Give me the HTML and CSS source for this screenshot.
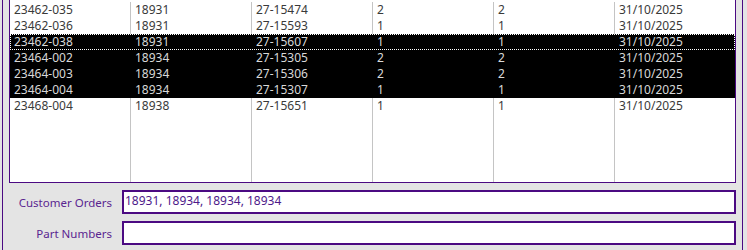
FILE: index.html
```html
<!DOCTYPE html>
<html lang="en">
  <head>
    <meta charset="UTF-8" />
    <title>Order Lines</title>
    <link rel="stylesheet" href="styles.css">
  </head>
  <body>
    <div class="form">
      <div class="list">
        <div class="row">
          <div class="cell">23462-035</div>
          <div class="cell">18931</div>
          <div class="cell">27-15474</div>
          <div class="cell">2</div>
          <div class="cell">2</div>
          <div class="cell">31/10/2025</div>
        </div>
        <div class="row">
          <div class="cell">23462-036</div>
          <div class="cell">18931</div>
          <div class="cell">27-15593</div>
          <div class="cell">1</div>
          <div class="cell">1</div>
          <div class="cell">31/10/2025</div>
        </div>
        <div class="row selected focused">
          <div class="cell">23462-038</div>
          <div class="cell">18931</div>
          <div class="cell">27-15607</div>
          <div class="cell">1</div>
          <div class="cell">1</div>
          <div class="cell">31/10/2025</div>
        </div>
        <div class="row selected">
          <div class="cell">23464-002</div>
          <div class="cell">18934</div>
          <div class="cell">27-15305</div>
          <div class="cell">2</div>
          <div class="cell">2</div>
          <div class="cell">31/10/2025</div>
        </div>
        <div class="row selected">
          <div class="cell">23464-003</div>
          <div class="cell">18934</div>
          <div class="cell">27-15306</div>
          <div class="cell">2</div>
          <div class="cell">2</div>
          <div class="cell">31/10/2025</div>
        </div>
        <div class="row selected">
          <div class="cell">23464-004</div>
          <div class="cell">18934</div>
          <div class="cell">27-15307</div>
          <div class="cell">1</div>
          <div class="cell">1</div>
          <div class="cell">31/10/2025</div>
        </div>
        <div class="row">
          <div class="cell">23468-004</div>
          <div class="cell">18938</div>
          <div class="cell">27-15651</div>
          <div class="cell">1</div>
          <div class="cell">1</div>
          <div class="cell">31/10/2025</div>
        </div>
        <div class="row filler">
          <div class="cell"></div>
          <div class="cell"></div>
          <div class="cell"></div>
          <div class="cell"></div>
          <div class="cell"></div>
          <div class="cell"></div>
        </div>
      </div>

      <div class="field">
        <label class="field-label">Customer Orders</label>
        <div class="field-box">18931, 18934, 18934, 18934</div>
      </div>
      <div class="field">
        <label class="field-label">Part Numbers</label>
        <div class="field-box"></div>
      </div>
    </div>
  </body>
</html>
```

FILE: styles.css
```css
* {
  margin: 0;
  padding: 0;
  box-sizing: border-box;
}

:root {
  --panel-color: #e4e4e4;
  --frame-color: #4b0a82;
  --grid-color: #c4c4c4;
  --text-color: #3a3a3a;
}

body {
  font-family: "Noto Sans", "Open Sans", sans-serif;
  font-size: 12px;
  background: var(--panel-color);
  color: var(--text-color);
  overflow: hidden;
}

.form {
  margin-left: 2px;
  width: 741px;
  height: 250px;
  border-left: 1px solid var(--frame-color);
  border-right: 1px solid var(--frame-color);
  padding: 0 6px;
  display: flex;
  flex-direction: column;
}

.list {
  height: 183px;
  background: #ffffff;
  border: 1px solid var(--frame-color);
  border-top: none;
  padding-top: 2px;
  display: flex;
  flex-direction: column;
}

.row {
  display: flex;
  height: 16px;
  line-height: 16px;
  position: relative;
}

.cell {
  width: 121px;
  padding-left: 4px;
  border-right: 1px solid var(--grid-color);
  white-space: nowrap;
}

.cell:last-child {
  width: 120px;
  border-right: none;
}

.row.selected {
  background: #000000;
  color: #d8d8d8;
}

.row.selected .cell {
  border-right-color: #000000;
}

.row.focused::after {
  content: "";
  position: absolute;
  inset: 0;
  border: 1px dotted #ffffff;
}

.row.filler {
  flex: 1;
}

.field {
  display: flex;
  align-items: center;
  gap: 10px;
  margin-top: 7px;
}

.field-label {
  width: 103px;
  text-align: right;
  font-size: 11.5px;
  color: #5a2490;
}

.field-box {
  flex: 1;
  height: 24px;
  background: #ffffff;
  border: 2px solid var(--frame-color);
  padding: 0 1px;
  line-height: 18px;
  color: #4e1a8a;
}
```
